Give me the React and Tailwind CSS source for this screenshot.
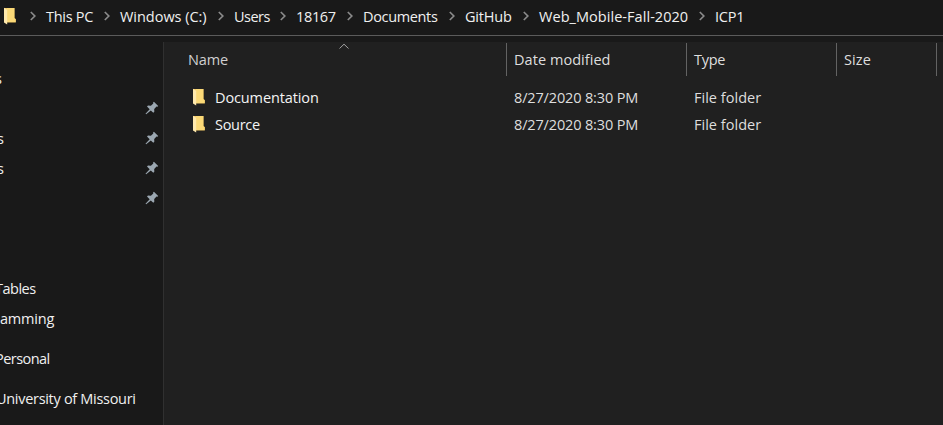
const crumbs = [
  ['This PC', 'w-[74px]', 'tracking-[-0.28px]'],
  ['Windows (C:)', 'w-[114px]', 'tracking-[-0.03px]'],
  ['Users', 'w-[62px]', 'tracking-[-0.5px]'],
  ['18167', 'w-[67px]', 'tracking-[-0.35px]'],
  ['Documents', 'w-[102px]', 'tracking-[-0.35px]'],
  ['GitHub', 'w-[74px]', 'tracking-[-0.2px]'],
  ['Web_Mobile-Fall-2020', 'w-[176px]', 'tracking-[0.05px]'],
  ['ICP1', 'w-[60px]', 'tracking-[-0.2px]'],
];

function Folder() {
  return (
    <svg width="14" height="18" viewBox="0 0 14 18" className="block shrink-0">
      <path d="M1 1h10.500v10l1.300 1V15.500H3z" fill="#f3cb66" />
      <path d="M4 1h7.300v10.500l1.300.7V15H4z" fill="#fbd977" />
      <path d="M1 .8l3.200 2v14.600L1 15.500z" fill="#ffe9ad" />
    </svg>
  );
}

function Chevron() {
  return (
    <svg width="8" height="10" viewBox="0 0 8 10" className="block shrink-0">
      <path d="M1.800 1l4 4-4 4" fill="none" stroke="#8a8a8a" strokeWidth="1.700" />
    </svg>
  );
}

function Pin() {
  return (
    <svg width="14" height="14" viewBox="0 0 14 14" className="block shrink-0">
      <path
        d="M8.900.8 13.200 5l-.8.800-.900-.200-2.300 2.400.1 2.800-1 1L5.800 9.400 1.200 13.300l-.700-.500L4.700 8.300 2 5.500l1-1 2.900.2L8.300 2.400 8.100 1.600z"
        fill="#9ba7b1"
      />
    </svg>
  );
}

function SideRow({ className, shift, text, pin, tracking = 'tracking-[-0.35px]' }) {
  return (
    <div className={`flex items-center justify-between pr-[4px] ${className}`}>
      <span className={`${shift} ${tracking}`}>{text}</span>
      {pin && <div className="pb-[2px]"><Pin /></div>}
    </div>
  );
}

const files = [
  ['Documentation', 'tracking-[-0.12px]'],
  ['Source', 'tracking-[-0.3px]'],
];

export default function App() {
  return (
    <div className="flex h-[425px] w-[943px] flex-col overflow-hidden whitespace-nowrap bg-[#191919] font-['Open_Sans','Noto_Sans',sans-serif] text-[14.5px] leading-5 text-[#f0f0f0]">
      <header className="flex h-9 shrink-0 items-center border-b border-[#5b5b5b] pl-[3px]">
        <div className="pb-[3px]"><Folder /></div>
        <div className="w-[29px] pb-[4px] pl-[12px]"><Chevron /></div>
        {crumbs.map(([label, width, tracking], i) => (
          <div key={label} className={`flex shrink-0 items-center justify-between pr-[9px] ${width}`}>
            <span className={`pb-px ${tracking}`}>{label}</span>
            {i < crumbs.length - 1 && <div className="pb-[4px]"><Chevron /></div>}
          </div>
        ))}
      </header>
      <div className="flex min-h-0 flex-1">
        <aside className="w-[163px] shrink-0 overflow-hidden pt-[28px]">
          <SideRow className="h-[30px]" shift="-ml-[5px]" text="s" />
          <SideRow className="h-[30px]" shift="" text="" pin />
          <SideRow className="h-[30px]" shift="-ml-[3px]" text="s" pin />
          <SideRow className="h-[30px]" shift="-ml-[3px]" text="s" pin />
          <SideRow className="h-[30px]" shift="" text="" pin />
          <SideRow className="mt-[60px] h-[30px]" shift="-ml-[5px]" text="Tables" tracking="tracking-[-0.5px]" />
          <SideRow className="h-[30px]" shift="ml-0" text="amming" tracking="tracking-[-0.2px]" />
          <SideRow className="mt-[10px] h-[30px]" shift="-ml-[5px]" text="Personal" tracking="tracking-[-0.55px]" />
          <SideRow className="mt-[10px] h-[30px]" shift="-ml-[4px]" text="University of Missouri" tracking="tracking-[-0.3px]" />
        </aside>
        <main className="mt-[6px] flex-1 border-l border-[#303030] bg-[#202020] text-[#dedede]">
          <div className="flex h-[34px] items-center">
            <div className="relative flex h-[33px] w-[343px] items-center border-r border-[#636363] pl-[24px] text-[#d0d0d0]">
              <span className="pt-[2px] tracking-[-0.1px]">Name</span>
              <svg width="12" height="7" viewBox="0 0 12 7" className="absolute left-[174px] top-0">
                <path d="M1.500 5.500 6 1.200l4.500 4.300" fill="none" stroke="#a0a0a0" />
              </svg>
            </div>
            <div className="flex h-[33px] w-[180px] items-center border-r border-[#636363] pl-[7px]">
              <span className="pt-[2px] tracking-[0.05px]">Date modified</span>
            </div>
            <div className="flex h-[33px] w-[150px] items-center border-r border-[#636363] pl-[7px]">
              <span className="pt-[2px] tracking-[-0.3px]">Type</span>
            </div>
            <div className="flex h-[33px] w-[100px] items-center border-r border-[#636363] pl-[7px]">
              <span className="pt-[2px] tracking-[0.1px]">Size</span>
            </div>
          </div>
          <div className="pt-[8px]">
            {files.map(([name, tracking]) => (
              <div key={name} className="flex h-[27px] items-center">
                <div className="flex w-[350px] items-center pl-[28px] text-[#f4f4f4]">
                  <div className="pb-[2px]"><Folder /></div>
                  <span className={`ml-[9px] ${tracking}`}>{name}</span>
                </div>
                <div className="w-[180px]"><span className="tracking-[-0.15px]">8/27/2020 8:30 PM</span></div>
                <div className="w-[150px]"><span className="tracking-[0.02px]">File folder</span></div>
              </div>
            ))}
          </div>
        </main>
      </div>
    </div>
  );
}
